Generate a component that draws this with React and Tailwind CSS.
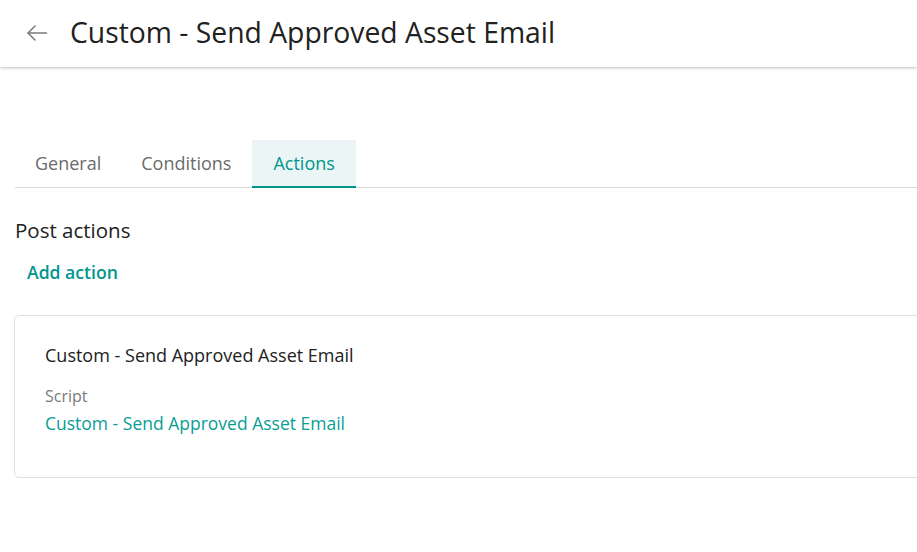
function App() {
  return (
    <div
      className="min-h-screen w-full overflow-hidden bg-white"
      style={{ fontFamily: '"Open Sans", "Noto Sans", sans-serif' }}
    >
      <header className="flex h-[67px] items-center bg-white shadow-[0_1px_3px_rgba(0,0,0,0.25)]">
        <button className="ml-[25px] mr-[21px] pb-[1px] text-[#7a7a7a]" aria-label="Back">
          <svg width="24" height="24" viewBox="0 0 24 24" fill="none" stroke="currentColor" strokeWidth="1.5" strokeLinecap="round" strokeLinejoin="round">
            <path d="M21.5 12H3" />
            <path d="M10 5l-7 7 7 7" />
          </svg>
        </button>
        <h1 className="pb-[2px] text-[28.3px] font-normal text-[#212121]">
          Custom - Send Approved Asset Email
        </h1>
      </header>

      <div className="pl-[15px] pt-[73px]">
        <nav className="flex h-[48px] border-b border-[#dcdcdc]">
          <div className="flex items-center px-[20px] text-[18px] text-[#6b6b6b]">General</div>
          <div className="flex items-center px-[20px] text-[18px] text-[#6b6b6b]">Conditions</div>
          <div className="-mb-px ml-px flex items-center border-b-2 border-[#00968f] bg-[#ebf5f5] px-[21px] text-[18px] font-medium text-[#00968f]">
            Actions
          </div>
        </nav>

        <h2 className="mt-[28px] text-[20.5px] leading-[28px] text-[#212121]">Post actions</h2>
        <button className="ml-[12px] mt-[16px] block text-[17.6px] font-semibold leading-[25px] text-[#00968f]">
          Add action
        </button>

        <div className="-ml-px mt-[29.5px] w-[1000px] rounded-[5px] border border-[#dedede] px-[30px] pt-[27px] pb-[42px]">
          <div className="text-[18px] font-medium leading-[25px] text-[#212121]">Custom - Send Approved Asset Email</div>
          <div className="mt-[17.5px] text-[16px] leading-[22px] text-[#7a7a7a]">Script</div>
          <div className="mt-[4px] text-[17.5px] leading-[24px] text-[#0a9d95]">Custom - Send Approved Asset Email</div>
        </div>
      </div>
    </div>
  );
}

export default App;
